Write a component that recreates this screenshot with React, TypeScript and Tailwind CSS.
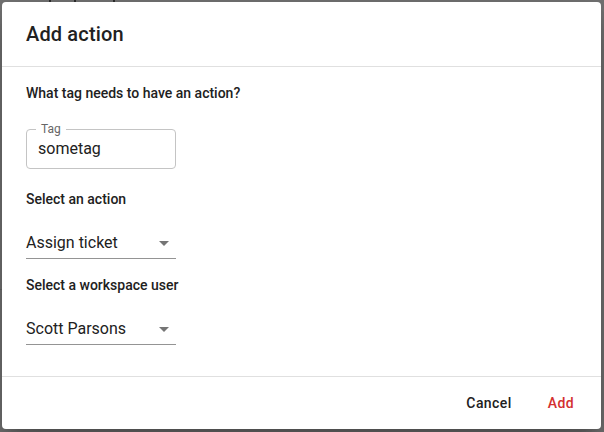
import React from 'react'

const FONT = { fontFamily: 'Roboto, "Noto Sans", Arial, sans-serif' }

const ArrowDrop = () => (
  <svg viewBox="0 0 24 24" width={24} height={24} className="absolute right-0 top-[1px] fill-[#757575]">
    <path d="M7 10l5 5 5-5z" />
  </svg>
)

const SelectField = ({ value }: { value: string }) => (
  <div className="relative w-[150px] border-b border-[#949494] pt-[1px] pb-[3px]">
    <div className="text-base leading-6 text-[#212121]">{value}</div>
    <ArrowDrop />
  </div>
)

const SectionLabel = ({ children }: { children: React.ReactNode }) => (
  <p className="text-sm leading-5 font-medium text-[#212121]">{children}</p>
)

export default function App() {
  return (
    <div className="relative w-[604px] h-[432px] bg-[#747474] overflow-hidden" style={FONT}>
      {/* bits of the page peeking out behind the backdrop */}
      <div className="absolute left-[49px] top-0 w-[2px] h-[2px] bg-[#2a2a2a]" />
      <div className="absolute left-[74px] top-0 w-[2px] h-[2px] bg-[#2a2a2a]" />
      <div className="absolute left-[113px] top-0 w-[2px] h-[2px] bg-[#2a2a2a]" />
      <div className="absolute left-0 top-[289px] w-[2px] h-[1px] bg-[#555]" />

      <div className="pt-[2px] pl-[2px]">
        <div className="w-[599px] bg-white rounded-[4px] shadow-[0_11px_15px_-7px_rgba(0,0,0,0.2),0_24px_38px_3px_rgba(0,0,0,0.14),0_9px_46px_8px_rgba(0,0,0,0.12)]">
          <div className="h-[64px] px-6 flex items-center">
            <h2 className="text-xl font-medium text-[#212121] tracking-[0.15px]">Add action</h2>
          </div>

          <div className="border-y border-[#e0e0e0] px-6 pt-4 pb-[31px] flex flex-col items-start">
            <SectionLabel>What tag needs to have an action?</SectionLabel>

            <div className="relative mt-[26px] w-[150px] h-[40px] rounded-[4px] border border-[#c4c4c4] flex items-center pl-[11px]">
              <span className="absolute left-[9px] -top-[7px] px-[5px] bg-white text-xs leading-none text-[#666]">Tag</span>
              <span className="text-base text-[#212121]">sometag</span>
            </div>

            <div className="mt-[20px] flex flex-col gap-[21px]">
              <SectionLabel>Select an action</SectionLabel>
              <SelectField value="Assign ticket" />
            </div>

            <div className="mt-[16px] flex flex-col gap-[21px]">
              <SectionLabel>Select a workspace user</SectionLabel>
              <SelectField value="Scott Parsons" />
            </div>
          </div>

          <div className="h-[52px] p-2 flex items-center justify-end gap-2">
            <button className="min-w-16 h-9 px-2 rounded text-sm font-medium tracking-[0.4px] text-[#212121]">Cancel</button>
            <button className="min-w-16 h-9 px-2 rounded text-sm font-medium tracking-[0.4px] text-[#d32f2f]">Add</button>
          </div>
        </div>
      </div>
    </div>
  )
}
